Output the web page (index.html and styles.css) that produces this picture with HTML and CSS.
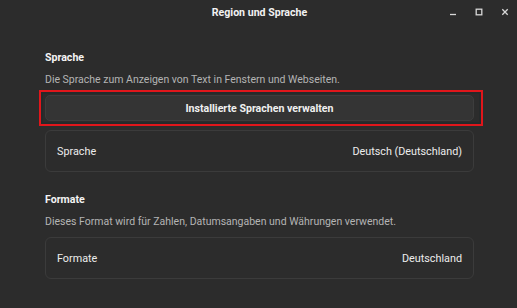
FILE: index.html
```html
<!DOCTYPE html>
<html lang="de">
<head>
<meta charset="utf-8">
<title>Region und Sprache</title>
<link rel="stylesheet" href="styles.css">
</head>
<body>
<div class="window">
  <header class="titlebar">
    <div class="title">Region und Sprache</div>
    <div class="controls">
      <svg class="ctl" width="10" height="10" viewBox="0 0 10 10"><path d="M2 7.5h6" stroke="#d8d8d8" stroke-width="1.3" fill="none"/></svg>
      <svg class="ctl" width="10" height="10" viewBox="0 0 10 10"><rect x="2.2" y="2.2" width="5.6" height="5.6" stroke="#d8d8d8" stroke-width="1.3" fill="none"/></svg>
      <svg class="ctl" width="10" height="10" viewBox="0 0 10 10"><path d="M2.3 2.3l5.4 5.4M7.7 2.3l-5.4 5.4" stroke="#d8d8d8" stroke-width="1.3" fill="none"/></svg>
    </div>
  </header>
  <main class="content">
    <section class="group">
      <h2 class="heading">Sprache</h2>
      <p class="desc">Die Sprache zum Anzeigen von Text in Fenstern und Webseiten.</p>
      <div class="highlight">
        <button class="btn">Installierte Sprachen verwalten</button>
      </div>
      <div class="card">
        <span class="label">Sprache</span>
        <span class="value">Deutsch (Deutschland)</span>
      </div>
    </section>
    <section class="group group-formats">
      <h2 class="heading">Formate</h2>
      <p class="desc">Dieses Format wird für Zahlen, Datumsangaben und Währungen verwendet.</p>
      <div class="card">
        <span class="label">Formate</span>
        <span class="value">Deutschland</span>
      </div>
    </section>
  </main>
</div>
</body>
</html>
```
FILE: styles.css
```css
* { box-sizing: border-box; }
html, body { margin: 0; padding: 0; }
body {
  background: #2c2c2c;
  font-family: Roboto, "Liberation Sans", sans-serif;
  color: #ececec;
  width: 517px;
  height: 308px;
  overflow: hidden;
}
.titlebar {
  height: 25px;
  display: flex;
  align-items: center;
  justify-content: center;
  position: relative;
}
.title {
  font-size: 10.6px;
  font-weight: 700;
  color: #f2f2f2;
  margin-left: 2px;
}
.controls {
  position: absolute;
  right: 7px;
  top: 7px;
  display: flex;
  gap: 16px;
}
.ctl { display: block; }
.content {
  padding: 25px 43px 0 45px;
}
.heading {
  margin: 0;
  font-size: 10.6px;
  font-weight: 700;
  color: #f4f4f4;
  line-height: 16px;
}
.desc {
  margin: 6px 0 0;
  font-size: 10.5px;
  color: #b4b4b4;
  line-height: 16px;
}
.highlight {
  position: relative;
  margin-top: 7px;
}
.highlight::after {
  content: "";
  position: absolute;
  left: -6px;
  right: -9px;
  top: -5px;
  bottom: -5px;
  border: 2px solid #e0161b;
  box-shadow: inset 0 0 0 2px #252a2b;
  pointer-events: none;
}
.btn {
  display: block;
  width: 100%;
  height: 26px;
  background: #343434;
  border: 1px solid #3d3d3d;
  border-radius: 5px;
  color: #f0f0f0;
  font-family: inherit;
  font-size: 10.6px;
  font-weight: 700;
  padding: 0;
}
.card {
  margin-top: 9px;
  height: 42px;
  border: 1px solid #3b3b3b;
  border-radius: 6px;
  display: flex;
  align-items: center;
  justify-content: space-between;
  padding: 0 11px;
  font-size: 10.8px;
  color: #ececec;
}
.group-formats { margin-top: 20px; }
.group-formats .card { margin-top: 7px; }
```
